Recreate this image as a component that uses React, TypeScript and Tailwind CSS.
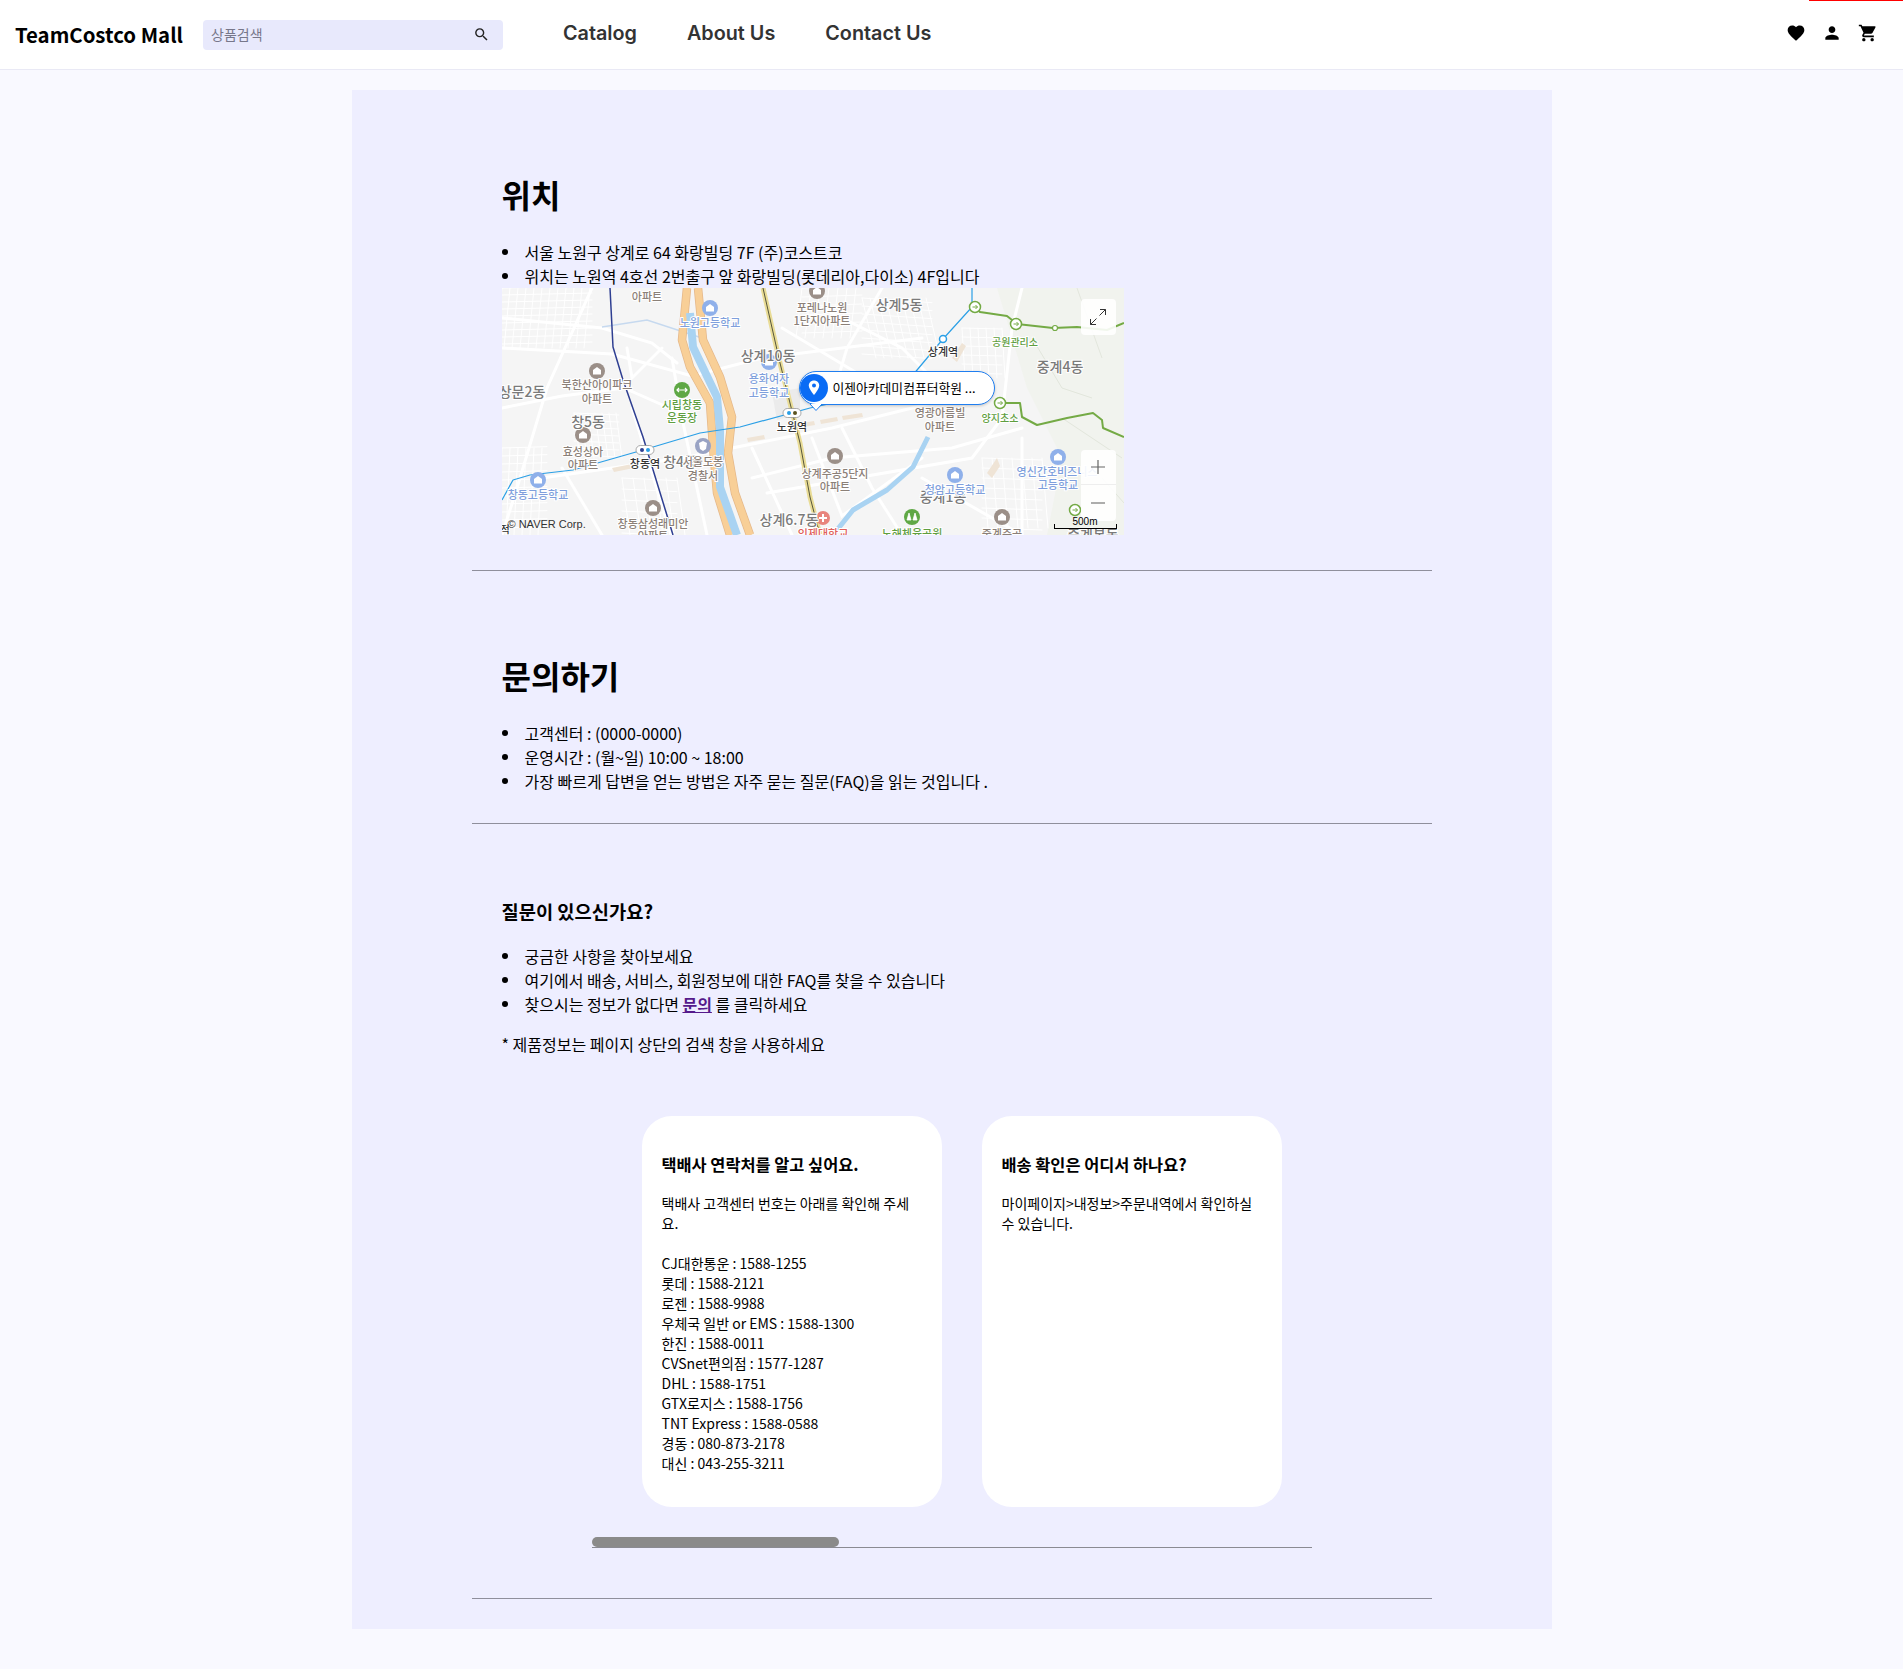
import React from "react";
import { MdFavorite, MdPerson, MdShoppingCart, MdSearch } from "react-icons/md";

const cjk = "font-['Noto_Sans_CJK_KR','Noto_Sans',sans-serif]";

type L = [number, number, string, string, number];
const GRAY = "#8b8078", SCH = "#7f9fdc", GRN = "#5f9e3f", DK = "#333", G2 = "#7a7a7a", RED = "#e0605a";

const labels: L[] = [
  [145, 13, "아파트", GRAY, 11],
  [208, 39, "노원고등학교", SCH, 11],
  [320, 24, "포레나노원", GRAY, 11],
  [320, 37, "1단지아파트", GRAY, 11],
  [397, 22, "상계5동", G2, 14],
  [266, 73, "상계10동", G2, 14],
  [267, 95, "용화여자", SCH, 11],
  [267, 109, "고등학교", SCH, 11],
  [95, 101, "북한산아이파크", GRAY, 11],
  [95, 115, "아파트", GRAY, 11],
  [20, 109, "상문2동", G2, 14],
  [180, 121, "시립창동", GRN, 11],
  [180, 134, "운동장", GRN, 11],
  [86, 139, "창5동", G2, 14],
  [81, 168, "효성상아", GRAY, 11],
  [81, 181, "아파트", GRAY, 11],
  [178, 179, "창4동", G2, 14],
  [201, 178, "서울도봉", GRAY, 11],
  [201, 192, "경찰서", GRAY, 11],
  [143, 180, "창동역", DK, 11],
  [36, 211, "창동고등학교", SCH, 11],
  [151, 240, "창동삼성래미안", GRAY, 11],
  [151, 252, "아파트", GRAY, 11],
  [3, 245, "적", DK, 10],
  [290, 143, "노원역", DK, 11],
  [287, 237, "상계6.7동", G2, 14],
  [333, 190, "상계주공5단지", GRAY, 11],
  [333, 203, "아파트", GRAY, 11],
  [441, 68, "상계역", DK, 11],
  [438, 129, "영광아름빌", GRAY, 11],
  [438, 143, "아파트", GRAY, 11],
  [513, 58, "공원관리소", GRN, 10],
  [558, 84, "중계4동", G2, 14],
  [498, 134, "양지초소", GRN, 10],
  [555, 188, "영신간호비즈니스", SCH, 11],
  [556, 201, "고등학교", SCH, 11],
  [441, 214, "중계1동", G2, 14],
  [453, 206, "청암고등학교", SCH, 11],
  [500, 250, "중계주공", GRAY, 11],
  [410, 250, "노해체육공원", GRN, 11],
  [321, 250, "인제대학교", RED, 11],
  [591, 252, "중계본동", G2, 14],
];

const dots: [number, number, string][] = [
  [208, 20, "#8fb0ea"],
  [267, 74, "#8fb0ea"],
  [36, 192, "#8fb0ea"],
  [453, 187, "#8fb0ea"],
  [556, 169, "#8fb0ea"],
  [95, 83, "#9b8f88"],
  [81, 147, "#9b8f88"],
  [151, 220, "#9b8f88"],
  [333, 168, "#9b8f88"],
  [315, 3, "#9b8f88"],
  [500, 229, "#9b8f88"],
];

function grid(x0: number, y0: number, w: number, h: number, dx: number, dy: number, skew: number) {
  let d = "";
  for (let x = x0; x <= x0 + w; x += dx) d += `M${x} ${y0}L${x + skew} ${y0 + h}`;
  for (let y = y0; y <= y0 + h; y += dy) d += `M${x0} ${y}L${x0 + w} ${y + skew / 3}`;
  return d;
}

function MapSvg() {
  return (
    <svg viewBox="0 0 622 247" className="block w-full h-full" xmlns="http://www.w3.org/2000/svg">
      <rect width="622" height="247" fill="#f5f5f5" />
      <path d="M495 0L622 0L622 247L545 247L560 170L525 100Z" fill="#f1f3ee" />
      <g fill="none" stroke="#ffffff" strokeLinecap="round">
        <g strokeWidth="1">
          <path d={grid(0, 0, 90, 60, 8, 7, -6)} />
          <path d={grid(0, 160, 45, 87, 8, 8, -4)} />
          <path d={grid(72, 125, 45, 45, 7, 7, 6)} />
          <path d={grid(360, 10, 70, 60, 8, 8, 14)} />
          <path d={grid(300, 0, 60, 50, 9, 9, -6)} />
          <path d={grid(460, 40, 40, 50, 8, 9, 3)} />
          <path d={grid(480, 170, 60, 70, 10, 10, 6)} />
          <path d={grid(120, 190, 55, 57, 11, 11, 8)} />
        </g>
        <g strokeWidth="3">
          <path d="M0 60L110 66L190 88L260 70L420 50" />
          <path d="M0 120L60 108L122 100L190 130" />
          <path d="M90 0L45 100L15 200L0 247" />
          <path d="M40 190L180 170L330 140L470 105" />
          <path d="M60 180L100 247" />
          <path d="M160 60L130 90L125 60" />
          <path d="M250 190L330 170L450 160L520 140" />
          <path d="M340 140L370 200L400 247" />
          <path d="M265 205L470 170L500 130L510 40L520 0" />
          <path d="M320 20L400 60L450 110" />
          <path d="M280 40L380 100" />
          <path d="M380 0L345 60L330 110" />
          <path d="M420 190L520 247" />
          <path d="M170 70L180 130L205 247" />
          <path d="M250 160L290 247" />
          <path d="M520 150L520 247" />
          <path d="M0 30L100 40L150 55L175 75" />
          <path d="M310 150L340 228L420 170" />
          <path d="M130 120L170 250" />
        </g>
      </g>
      <path d="M530 50L560 100L590 110M575 0L600 70M560 130L620 170M600 190L622 215" fill="none" stroke="#e2e6dc" strokeWidth="1" />
      <path d="M100 39L145 32L200 50" fill="none" stroke="#c6d9ef" strokeWidth="1.5" />
      <path d="M270 105L298 100L298 125L275 132Z" fill="#ebebeb" />
      <g fill="#efe4d6">
        <path d="M300 135L312 133L313 137L301 139Z" />
        <path d="M318 132L335 129L336 133L319 136Z" />
        <path d="M340 128L360 125L361 129L341 132Z" />
        <path d="M110 180L135 175L137 179L112 184Z" />
        <path d="M245 150L262 147L263 151L246 154Z" />
        <path d="M450 70L460 55L464 58L455 74Z" />
        <path d="M485 185L495 170L498 178L490 190Z" />
      </g>
      <g fill="none" strokeLinejoin="round">
        <path d="M185 0L180 52L188 79L208 115L211 159L215 205L228 247" stroke="#e5b88a" strokeWidth="8.5" />
        <path d="M196 0L201 52L218 89L230 129L226 165L233 205L248 247" stroke="#e5b88a" strokeWidth="8.5" />
        <path d="M185 0L180 52L188 79L208 115L211 159L215 205L228 247" stroke="#f8cf97" strokeWidth="7" />
        <path d="M196 0L201 52L218 89L230 129L226 165L233 205L248 247" stroke="#f8cf97" strokeWidth="7" />
        <path d="M188 25L191 59L215 109L218 142L218 199L235 247" stroke="#a9d3f2" strokeWidth="8" />
        <path d="M331 247L351 222L385 202L411 179L426 149" stroke="#a9d3f2" strokeWidth="5" />
        <path d="M261 0L278 75L298 155L308 209L318 247" stroke="#e9dc96" strokeWidth="5" />
        <path d="M261 0L278 75L298 155L308 209L318 247" stroke="#56563a" strokeWidth="1" />
        <path d="M108 0L111 59L121 92L141 149L171 247" stroke="#2f3f92" strokeWidth="1.5" />
        <path d="M0 212L11 192L28 187L71 182L141 162L198 145L238 139L308 120L400 100L441 51L470 19L470 0" stroke="#2a9fe6" strokeWidth="1.2" />
        <path d="M473 19L478 24L505 28L515 36L551 40L575 39L605 42L622 35" stroke="#74aa45" strokeWidth="2" />
        <path d="M498 115L518 115L520 129L535 137L565 130L591 125L600 132L601 140L622 149" stroke="#74aa45" strokeWidth="2" />
      </g>
      {dots.map(([x, y, c], i) => (
        <g key={i}>
          <circle cx={x} cy={y} r="8" fill={c} />
          <path d={`M${x - 4} ${y + 3.5}V${y - 1}L${x} ${y - 4}L${x + 4} ${y - 1}V${y + 3.5}Z`} fill="#ffffff" />
        </g>
      ))}
      <circle cx="180" cy="102" r="8" fill="#5fa845" />
      <path d="M175 102H185M177 100L175 102L177 104M183 100L185 102L183 104" stroke="#fff" strokeWidth="1.2" fill="none" />
      <circle cx="201" cy="158" r="8" fill="#99a3c4" />
      <path d="M201 153L205 155L204 161L201 163L198 161L197 155Z" fill="#fff" />
      <circle cx="410" cy="229" r="8" fill="#5fa845" />
      <path d="M407 225L405 232H409ZM413 225L411 232H415Z" fill="#fff" stroke="#fff" strokeWidth="0.8" />
      <circle cx="321" cy="230" r="7" fill="#e8847c" />
      <path d="M317 230H325M321 226V234" stroke="#fff" strokeWidth="2" />
      {[[473, 19], [514, 36], [498, 115], [573, 222]].map(([x, y], i) => (
        <g key={i}>
          <circle cx={x} cy={y} r="5.5" fill="#fff" stroke="#74aa45" strokeWidth="1.5" />
          <path d={`M${x - 2.5} ${y}H${x + 2.5}M${x + 0.5} ${y - 2}L${x + 2.5} ${y}L${x + 0.5} ${y + 2}`} stroke="#74aa45" strokeWidth="1" fill="none" />
        </g>
      ))}
      <circle cx="441" cy="51" r="3.5" fill="#fff" stroke="#2a9fe6" strokeWidth="1.5" />
      <circle cx="553" cy="40" r="2.5" fill="#fff" stroke="#74aa45" strokeWidth="1.2" />
      {[[143, 162, "#2f3f92", "#2a9fe6"], [290, 125, "#2a9fe6", "#5c5420"]].map(([x, y, a, b], i) => (
        <g key={i}>
          <rect x={(x as number) - 9} y={(y as number) - 4.5} width="18" height="9" rx="4.5" fill="#fff" stroke="#888" strokeWidth="0.7" />
          <circle cx={(x as number) - 3} cy={y as number} r="2" fill={a as string} />
          <circle cx={(x as number) + 3} cy={y as number} r="2" fill={b as string} />
        </g>
      ))}
      {labels.map(([x, y, t, c, s], i) => (
        <text
          key={i}
          x={x}
          y={y}
          fill={c}
          fontSize={s}
          textAnchor="middle"
          stroke="#ffffff"
          strokeWidth="2"
          className="[paint-order:stroke] font-['Noto_Sans_CJK_KR',sans-serif] font-medium"
        >
          {t}
        </text>
      ))}
    </svg>
  );
}

function MapBlock() {
  return (
    <div className="relative w-[622px] h-[247px] overflow-hidden">
      <MapSvg />
      <div className="absolute left-[297px] top-[83px] w-[196px] h-[34px] rounded-[17px] bg-white border border-[#1f7ef0] flex items-center shadow-[0_1px_3px_rgba(0,0,0,0.2)]">
        <div className="w-[28px] h-[28px] rounded-full bg-[#0a6cf5] flex items-center justify-center">
          <svg width="12" height="16" viewBox="0 0 12 16">
            <path d="M6 0.5C2.9 0.5 0.8 2.8 0.8 5.6C0.8 9.2 6 15 6 15S11.2 9.2 11.2 5.6C11.2 2.8 9.1 0.5 6 0.5Z" fill="#fff" />
            <circle cx="6" cy="5.6" r="2" fill="#0a6cf5" />
          </svg>
        </div>
        <span className={`ml-[5px] text-[12.8px] font-normal text-black whitespace-nowrap ${cjk}`}>이젠아카데미컴퓨터학원 ...</span>
      </div>
      <svg className="absolute left-[308px] top-[116px]" width="12" height="7" viewBox="0 0 12 7">
        <path d="M0 0L6 6.5L12 0" fill="#fff" stroke="#1f7ef0" />
      </svg>
      <div className="absolute left-[579px] top-[11px] w-[35px] h-[36px] rounded-[4px] bg-white/90 flex items-center justify-center">
        <svg width="18" height="18" viewBox="0 0 18 18" fill="none" stroke="#333" strokeWidth="1">
          <path d="M11 1.5H16.5V7M16.5 1.5L10.5 7.5M7 16.5H1.5V11M1.5 16.5L7.5 10.5" />
        </svg>
      </div>
      <div className="absolute left-[579px] top-[162px] w-[35px] h-[71px] rounded-[4px] bg-white/90 flex flex-col items-center">
        <div className="w-full h-[35px] flex items-center justify-center border-b border-[#eeeeee]">
          <svg width="14" height="14" viewBox="0 0 14 14" stroke="#666" strokeWidth="1.2"><path d="M0 7H14M7 0V14" /></svg>
        </div>
        <div className="w-full flex-1 flex items-center justify-center">
          <svg width="14" height="14" viewBox="0 0 14 14" stroke="#777" strokeWidth="1.2"><path d="M0 7H14" /></svg>
        </div>
      </div>
      <span className="absolute left-[6px] top-[229px] text-[11px] leading-[14px] text-[#333] font-['Liberation_Sans',sans-serif]">© NAVER Corp.</span>
      <div className="absolute left-[552px] top-[236px] w-[63px] h-[5px] border-x border-b border-black flex justify-center">
        <span className="-mt-[8px] text-[10px] leading-[12px] text-black font-['Liberation_Sans',sans-serif]">500m</span>
      </div>
    </div>
  );
}

function Li({ children }: { children: React.ReactNode }) {
  return (
    <li className="flex items-center h-[24px] leading-[24px]">
      <span className="w-[6px] h-[6px] mr-[17px] shrink-0 rounded-full bg-black" />
      <span>{children}</span>
    </li>
  );
}

function Card({ title, children }: { title: string; children: React.ReactNode }) {
  return (
    <div className="w-[300px] h-[391px] shrink-0 rounded-[30px] bg-white px-[20px] pt-[36px]">
      <h4 className="text-[16.38px] leading-[24px] font-bold text-black">{title}</h4>
      <div className="mt-[17px] text-[14px] leading-[20px] text-black">{children}</div>
    </div>
  );
}

export default function App() {
  return (
    <div className={`min-h-[1669px] bg-[#f9f9ff] text-black ${cjk}`}>
      <header className="relative h-[70px] bg-white border-b border-[#e9e9f5] flex items-center">
        <div className="absolute right-0 top-0 w-[94px] h-[1px] bg-[#ff0000]" />
        <div className="ml-[15px] w-[188px] text-[20.4px] font-bold leading-[30px] text-black -mt-[1px]">TeamCostco Mall</div>
        <div className="w-[300px] h-[30px] rounded-[4px] bg-[#e8e9fc] flex items-center pl-[8px] pr-[13px]">
          <span className="flex-1 text-[14px] text-[#77778a]">상품검색</span>
          <MdSearch size={17} className="text-[#222]" />
        </div>
        <nav className="ml-[60px] flex gap-[50px] text-[19.8px] font-semibold text-[#333] font-['Inter',sans-serif] -mt-[1px]">
          <span>Catalog</span>
          <span>About Us</span>
          <span>Contact Us</span>
        </nav>
        <div className="ml-auto mr-[25px] flex items-center gap-[16px] text-black -mt-[3px]">
          <MdFavorite size={20} />
          <MdPerson size={20} />
          <MdShoppingCart size={20} />
        </div>
      </header>
      <main className="mx-auto mt-[20px] w-[1200px] h-[1539px] bg-[#eeeeff] px-[120px]">
        <section className="h-[481px] px-[30px] pt-[77px] border-b border-[#8f8f9c]">
          <h2 className="text-[32px] leading-[54px] font-bold">위치</h2>
          <ul className="mt-[19px] text-[16px]">
            <Li>서울 노원구 상계로 64 화랑빌딩 7F (주)코스트코</Li>
            <Li>위치는 노원역 4호선 2번출구 앞 화랑빌딩(롯데리아,다이소) 4F입니다</Li>
          </ul>
          <MapBlock />
        </section>
        <section className="h-[253px] px-[30px] pt-[77px] border-b border-[#8f8f9c]">
          <h2 className="text-[32px] leading-[54px] font-bold">문의하기</h2>
          <ul className="mt-[19px] text-[16px]">
            <Li>고객센터 : (0000-0000)</Li>
            <Li>운영시간 : (월~일) 10:00 ~ 18:00</Li>
            <Li>가장 빠르게 답변을 얻는 방법은 자주 묻는 질문(FAQ)을 읽는 것입니다 .</Li>
          </ul>
        </section>
        <section className="h-[775px] px-[30px] pt-[72px] border-b border-[#8f8f9c]">
          <h3 className="text-[18.72px] leading-[30px] font-bold">질문이 있으신가요?</h3>
          <ul className="mt-[18px] text-[16px]">
            <Li>궁금한 사항을 찾아보세요</Li>
            <Li>여기에서 배송, 서비스, 회원정보에 대한 FAQ를 찾을 수 있습니다</Li>
            <Li>
              찾으시는 정보가 없다면 <a className="font-bold text-[#551a8b] underline">문의</a> 를 클릭하세요
            </Li>
          </ul>
          <p className="mt-[16px] text-[16px] leading-[24px]">* 제품정보는 페이지 상단의 검색 창을 사용하세요</p>
          <div className="mt-[60px] ml-[140px] flex gap-[40px]">
            <Card title="택배사 연락처를 알고 싶어요.">
              <p>택배사 고객센터 번호는 아래를 확인해 주세요.</p>
              <p className="mt-[20px]">
                CJ대한통운 : 1588-1255<br />
                롯데 : 1588-2121<br />
                로젠 : 1588-9988<br />
                우체국 일반 or EMS : 1588-1300<br />
                한진 : 1588-0011<br />
                CVSnet편의점 : 1577-1287<br />
                DHL : 1588-1751<br />
                GTX로지스 : 1588-1756<br />
                TNT Express : 1588-0588<br />
                경동 : 080-873-2178<br />
                대신 : 043-255-3211
              </p>
            </Card>
            <Card title="배송 확인은 어디서 하나요?">
              <p>마이페이지&gt;내정보&gt;주문내역에서 확인하실 수 있습니다.</p>
            </Card>
          </div>
          <div className="mt-[30px] ml-[90px] w-[720px] h-[11px] border-b border-[#8a8a92]">
            <div className="w-[247px] h-[10px] rounded-[5px] bg-[#8a8a8a]" />
          </div>
        </section>
      </main>
    </div>
  );
}
